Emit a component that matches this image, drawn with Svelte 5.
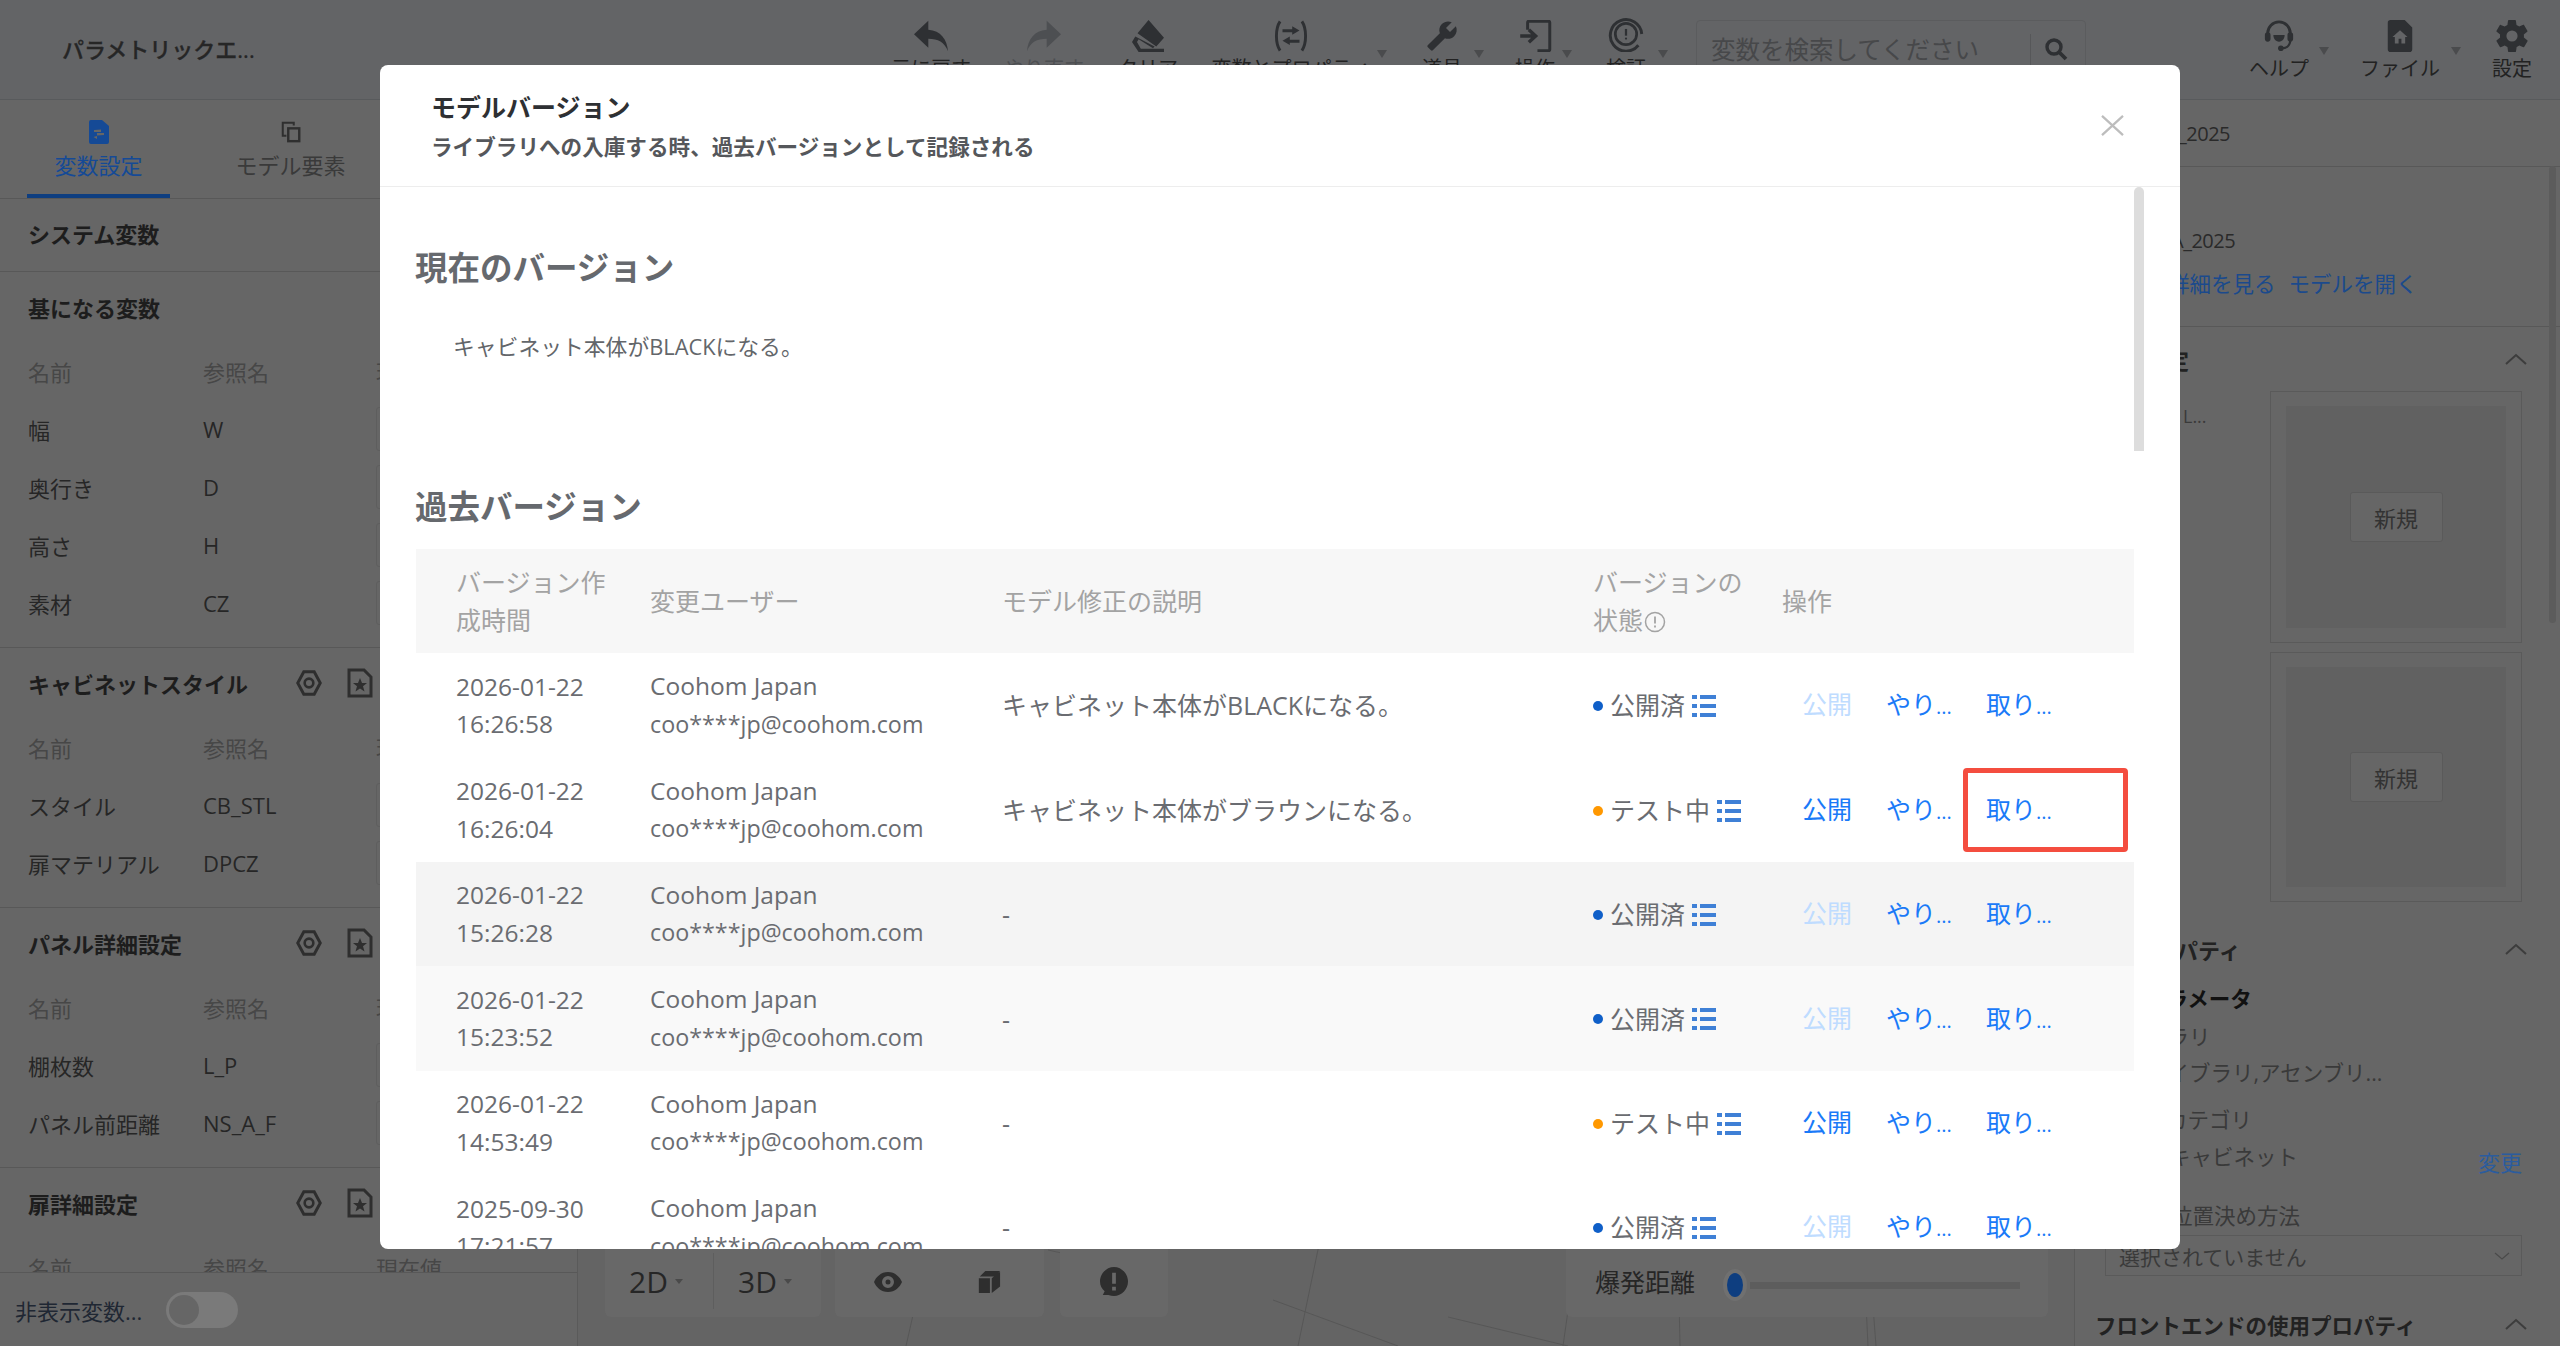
<script>
  const rows = [
    { d: '2026-01-22', t: '16:26:58', desc: 'キャビネット本体がBLACKになる。', s: 'pub' },
    { d: '2026-01-22', t: '16:26:04', desc: 'キャビネット本体がブラウンになる。', s: 'test', mark: true },
    { d: '2026-01-22', t: '15:26:28', desc: '-', s: 'pub', bg: 'hover' },
    { d: '2026-01-22', t: '15:23:52', desc: '-', s: 'pub', bg: 'soft' },
    { d: '2026-01-22', t: '14:53:49', desc: '-', s: 'test' },
    { d: '2025-09-30', t: '17:21:57', desc: '-', s: 'pub' }
  ];
  const sections = [
    { title: '基になる変数', items: [['幅', 'W'], ['奥行き', 'D'], ['高さ', 'H'], ['素材', 'CZ']] },
    { title: 'キャビネットスタイル', icons: true, items: [['スタイル', 'CB_STL'], ['扉マテリアル', 'DPCZ']] },
    { title: 'パネル詳細設定', icons: true, items: [['棚枚数', 'L_P'], ['パネル前距離', 'NS_A_F']] },
    { title: '扉詳細設定', icons: true, items: [] }
  ];
</script>

{#snippet chevUp()}
  <svg class="chev" viewBox="0 0 22 12"><path d="M1 11 11 2l10 9" fill="none" stroke="#3d3d3d" stroke-width="2"/></svg>
{/snippet}

<div class="page">
  <header class="top">
    <div class="brand">パラメトリックエ...</div>
    <div class="tool w112">
      <svg viewBox="2 4 19 17" class="ic"><path d="M10 9V4L2 11.500 10 19v-5c5.500 0 9 1.800 11 7-.5-6.500-4-11.500-11-12z"/></svg>
      <span>元に戻す</span>
    </div>
    <div class="tool w114 off">
      <svg viewBox="3 4 19 17" class="ic"><path d="M14 9V4l8 7.500-8 7.500v-5c-5.500 0-9 1.800-11 7 .5-6.500 4-11.500 11-12z"/></svg>
      <span>やり直す</span>
    </div>
    <div class="tool w94">
      <svg viewBox="0 0 29 29" class="ic"><path d="M15 0 29 16 22 24 5 12zM3 15 0 20l6 9h23v-3H8l-3.500-6 1.500-2.500 13 8 1.500-1.500z"/></svg>
      <span>クリア</span>
    </div>
    <div class="tool w192">
      <svg viewBox="2 1 28 26" class="ic"><path d="M7 2C3 8 3 20 7 26M25 2c4 6 4 18 0 24" fill="none" stroke="#2e3033" stroke-width="2.400"/><path d="M9 8.500h8V6l6 3.500-6 3.500v-2H9zM23 17h-8v-2.500L9 18l6 3.500v-2h8z"/></svg>
      <span>変数とプロパティ</span><i class="caret"></i>
    </div>
    <div class="tool w110">
      <svg viewBox="0 0 24 24" class="ic"><path d="M1.300 19 10.400 9.900c-.9-2.300-.4-5 1.500-6.900 2-2 5-2.400 7.400-1.300L15 6l3 3 4.400-4.300c1.200 2.400.7 5.400-1.300 7.400-1.900 1.900-4.600 2.400-6.900 1.500l-9.100 9.100c-.4.4-1 .4-1.400 0l-2.300-2.300c-.5-.4-.5-1.100-.1-1.400z"/></svg>
      <span>道具</span><i class="caret"></i>
    </div>
    <div class="tool w76">
      <svg viewBox="1 1 26 26" class="ic"><path d="M8 9V3a1 1 0 0 1 1-1h16a1 1 0 0 1 1 1v22a1 1 0 0 1-1 1h-9" fill="none" stroke="#2e3033" stroke-width="2.400"/><path d="M2 14h11M9 9l5.500 5L9 19" fill="none" stroke="#2e3033" stroke-width="2.800"/></svg>
      <span>操作</span><i class="caret"></i>
    </div>
    <div class="tool w106">
      <svg viewBox="0 0 32 32" class="ic big"><path d="M27 26A14 14 0 1 1 30 16" fill="none" stroke="#2e3033" stroke-width="2.600"/><circle cx="16" cy="16" r="9.500" fill="none" stroke="#2e3033" stroke-width="2.400"/><path d="M16 11.500v6" stroke="#2e3033" stroke-width="2"/><circle cx="16" cy="20" r="1" /></svg>
      <span>検証</span><i class="caret"></i>
    </div>
    <div class="search">
      <span class="ph">変数を検索してください</span>
      <span class="sbtn">
        <svg viewBox="0 0 24 24" class="sic"><circle cx="10" cy="10" r="7" fill="none" stroke="#2e3033" stroke-width="3.400"/><path d="m15 15 7 7" stroke="#2e3033" stroke-width="3.800"/></svg>
      </span>
    </div>
    <div class="tool w100 help">
      <svg viewBox="0 0 34 34" class="ic"><path d="M5 18v-4a12 12 0 0 1 24 0v4" fill="none" stroke="#2e3033" stroke-width="3"/><rect x="2" y="13" width="6" height="10" rx="3"/><rect x="26" y="13" width="6" height="10" rx="3"/><path d="M11 16h12c0 4-2.500 7-6 7s-6-3-6-7z"/><path d="M29 21c0 6-4 9-9 9" fill="none" stroke="#2e3033" stroke-width="2.400"/><circle cx="19" cy="30" r="3"/></svg>
      <span>ヘルプ</span><i class="caret"></i>
    </div>
    <div class="tool w142">
      <svg viewBox="0 0 26 34" class="ic"><path fill-rule="evenodd" d="M3 0h15l8 8v23a3 3 0 0 1-3 3H3a3 3 0 0 1-3-3V3a3 3 0 0 1 3-3zM13 11 5 18h2.500v7h4v-5h3v5h4v-7H21z"/></svg>
      <span>ファイル</span><i class="caret"></i>
    </div>
    <div class="tool w82">
      <svg viewBox="2 2 20 20" class="ic"><path d="M19.400 13c.04-.3.06-.65.06-1s-.02-.7-.07-1l2.100-1.650c.2-.15.25-.42.12-.64l-2-3.460c-.12-.22-.38-.3-.6-.22l-2.500 1c-.52-.4-1.070-.73-1.700-.98l-.37-2.650A.5.500 0 0 0 14 2h-4a.5.500 0 0 0-.5.420l-.37 2.650c-.6.250-1.180.590-1.700.980l-2.500-1c-.22-.08-.48 0-.6.220l-2 3.460c-.13.220-.07.490.12.640L4.570 11c-.05.3-.07.670-.07 1s.02.7.07 1l-2.100 1.650c-.2.150-.25.420-.12.640l2 3.460c.12.220.38.300.6.220l2.500-1c.52.400 1.070.730 1.700.980l.37 2.650c.05.240.25.420.5.420h4c.25 0 .46-.18.5-.42l.37-2.650c.6-.25 1.180-.58 1.700-.98l2.500 1c.22.080.48 0 .6-.22l2-3.460c.12-.22.07-.49-.12-.64zM12 15.500a3.500 3.500 0 1 1 0-7 3.500 3.500 0 0 1 0 7z"/></svg>
      <span>設定</span>
    </div>
  </header>

  <div class="main">
    <aside class="left">
      <div class="tabs">
        <div class="tab active">
          <svg viewBox="0 0 20 24" class="tabic"><path fill="#154a96" fill-rule="evenodd" d="M2 0h11l7 6v16a2 2 0 0 1-2 2H2a2 2 0 0 1-2-2V2a2 2 0 0 1 2-2zM5 10v2h7V9.500zM15 15v-2H8v2.500zM8 16v3l-3.500-2z"/></svg>
          <span>変数設定</span>
        </div>
        <div class="tab">
          <svg viewBox="0 0 24 24" class="tabic"><path d="M15 5V2H3v14h4" fill="none" stroke="#2f2f2f" stroke-width="2.200"/><rect x="9" y="8" width="12" height="14" fill="none" stroke="#2f2f2f" stroke-width="2.600"/></svg>
          <span>モデル要素</span>
        </div>
      </div>
      <div class="vars">
        <div class="sys">システム変数</div>
        {#each sections as sec}
          <section class="sec">
            <div class="sechead">
              <span>{sec.title}</span>
              {#if sec.icons}
                <svg viewBox="0 0 28 30" class="hex"><path d="M8 2h12l7 13-7 13H8L1 15z" fill="none" stroke="#2e2e2e" stroke-width="3.400"/><circle cx="14" cy="15" r="5" fill="none" stroke="#2e2e2e" stroke-width="3"/></svg>
                <svg viewBox="0 0 26 30" class="star"><path d="M2 9V2h15l7 7v19H2v-5" fill="none" stroke="#2e2e2e" stroke-width="3"/><path d="M2 9v14" stroke="#2e2e2e" stroke-width="3"/><path d="m13 10 2 5h5l-4 3.200 1.500 5.300-4.500-3-4.500 3L10 18.200 6 15h5z" fill="#2e2e2e"/></svg>
              {/if}
            </div>
            <div class="vrow headrow"><span class="c1">名前</span><span class="c2">参照名</span><span>現在値</span></div>
            {#each sec.items as it}
              <div class="vrow"><span class="c1">{it[0]}</span><span class="c2">{it[1]}</span><span class="inp"></span></div>
            {/each}
          </section>
        {/each}
      </div>
      <div class="foot">
        <span>非表示変数...</span>
        <span class="toggle"><i></i></span>
      </div>
    </aside>

    <div class="canvas">
      <svg class="lines" viewBox="0 0 1496 1246">
        <path d="M352 1140 328 1246M742 1140 720 1246M1000 1140 985 1246M1285 1140 1290 1246M1530 1140 1540 1246M695 1200 820 1246M470 1150 560 1170M870 1217 990 1246M1100 1149 1102 1246M1290 1140 1298 1246" fill="none" stroke="#575757" stroke-width="1"/>
      </svg>
      <div class="bars">
        <div class="bar dim">
          <span class="dimcell">2D<i></i></span>
          <span class="dimcell sep">3D<i></i></span>
        </div>
        <div class="bar views">
          <svg viewBox="0 0 30 22" class="eye"><path fill-rule="evenodd" d="M15 1c7 0 12 5 14 10-2 5-7 10-14 10S3 16 1 11C3 6 8 1 15 1zm0 4a6 6 0 1 0 0 12 6 6 0 0 0 0-12zm0 3.500a2.500 2.500 0 1 1 0 5 2.500 2.500 0 0 1 0-5z" fill="#2e2e2e"/></svg>
          <svg viewBox="0 0 26 26" class="cube"><path d="M9 1h16l-5 6H3zM2 9h12v16H2zM16 9l9-7v16l-9 7z" fill="#2e2e2e"/></svg>
        </div>
        <div class="bar warn">
          <svg viewBox="0 0 30 32" class="warnic"><path fill-rule="evenodd" d="M15 0c8 0 15 7 15 15.500S23 31 15 31c-2 0-4-.3-6-1H3l2-4C2 23 0 20 0 15.500 0 7 7 0 15 0zm-2 6v12h4V6zm0 15v4h4v-4z" fill="#2e2e2e"/></svg>
        </div>
        <div class="bar explode">
          <span>爆発距離</span>
          <span class="slider"><i></i></span>
        </div>
      </div>
    </div>

    <aside class="right">
      <div class="rhead"><span>_2025</span></div>
      <div class="rinfo">
        <div class="rname">A_2025</div>
        <div class="rlinks"><span>詳細を見る</span><span>モデルを開く</span></div>
      </div>
      <div class="rsec">定{@render chevUp()}</div>
      <div class="thumbs">
        <span class="tl">L...</span>
        <div class="tcol">
          <div class="tbox first"><div class="tin"><span class="new">新規</span></div></div>
          <div class="tbox"><div class="tin"><span class="new">新規</span></div></div>
        </div>
      </div>
      <div class="rsec s2"><span class="l">プロパティ</span>{@render chevUp()}</div>
      <div class="rl bold a1">パラメータ</div>
      <div class="rl a2">ライブラリ</div>
      <div class="rl a3">ライブラリ,アセンブリ...</div>
      <div class="rl a4">カテゴリ</div>
      <div class="rl a5"><span>キャビネット</span><b>変更</b></div>
      <div class="rl a6">位置決め方法</div>
      <div class="sel"><span>選択されていません</span>
        <svg viewBox="0 0 16 8" class="selc"><path d="m1 1 7 6 7-6" fill="none" stroke="#4a4a4a" stroke-width="1.200"/></svg>
      </div>
      <div class="rsec s3"><span class="l">フロントエンドの使用プロパティ</span>{@render chevUp()}</div>
    </aside>
  </div>

  <div class="modal">
    <div class="mhead">
      <div class="mtitle">モデルバージョン</div>
      <div class="msub">ライブラリへの入庫する時、過去バージョンとして記録される</div>
      <svg viewBox="0 0 24 22" class="close"><path d="m1 1 22 20M23 1 1 21" fill="none" stroke="#bdbdbd" stroke-width="2.400"/></svg>
    </div>
    <div class="mbody">
      <div class="thumbar"></div>
      <h2 class="h1st">現在のバージョン</h2>
      <p class="cur">キャビネット本体がBLACKになる。</p>
      <h2 class="h2nd">過去バージョン</h2>
      <div class="table">
        <div class="tr th">
          <div class="col1">バージョン作成時間</div>
          <div>変更ユーザー</div>
          <div>モデル修正の説明</div>
          <div class="st">バージョンの<br/>状態<svg viewBox="0 0 22 22" class="info"><circle cx="11" cy="11" r="9.500" fill="none" stroke="#a3a3a3" stroke-width="1.500"/><path d="M11 5.500v7M11 14.500v2" stroke="#a3a3a3" stroke-width="1.800"/></svg></div>
          <div>操作</div>
        </div>
        {#each rows as r}
          <div class="tr {r.bg || ''}">
            <div class="col1 lat">{r.d}<br/>{r.t}</div>
            <div><span class="lat">Coohom Japan</span><br/><span class="mail">coo****jp@coohom.com</span></div>
            <div class="low">{r.desc}</div>
            <div class="status low">
              <i class="dot {r.s}"></i>
              <span>{r.s === 'pub' ? '公開済' : 'テスト中'}</span>
              <svg viewBox="0 0 24 22" class="list"><path d="M0 0h5v4H0zM8 0h16v4H8zM0 9h5v4H0zM8 9h16v4H8zM0 18h5v4H0zM8 18h16v4H8z" fill="#3f80d6"/></svg>
            </div>
            <div class="ops low">
              <span class="a pubbtn" class:dis={r.s === 'pub'}>公開</span>
              <span class="a redo">やり<small>...</small></span>
              <span class="a">取り<small>...</small></span>
            </div>
            {#if r.mark}<div class="mark"></div>{/if}
          </div>
        {/each}
      </div>
    </div>
  </div>
</div>

<style>
  :global(body) { margin: 0; background: #666; }
  .page {
    position: relative;
    width: 2560px;
    height: 1346px;
    overflow: hidden;
    display: flex;
    flex-direction: column;
    font-family: "Open Sans", "Noto Sans CJK JP", sans-serif;
    font-size: 22px;
    color: #222;
    background: #666;
  }
  .top {
    height: 100px;
    box-sizing: border-box;
    border-bottom: 1px solid #585a5c;
    background: #636466;
    display: flex;
    flex: none;
    position: relative;
  }
  .brand {
    width: 875px;
    box-sizing: border-box;
    padding: 32px 0 0 62px;
    font-size: 22px;
    line-height: 34px;
    font-weight: 500;
    color: #262626;
    -webkit-text-stroke: 0.3px #262626;
  }
  .tool {
    position: relative;
    display: flex;
    flex-direction: column;
    align-items: center;
    font-size: 20px;
    color: #222;
    padding-top: 20px;
    box-sizing: border-box;
  }
  .tool span { line-height: 28px; margin-top: 3px; white-space: nowrap; }
  .ic { width: 34px; height: 32px; fill: #2e3033; display: block; }
  .big { height: 36px; width: 36px; margin-top: -4px; }
  .off { color: #4d4f52; }
  .off .ic { fill: #4d4f52; }
  .w112 { width: 112px; }
  .w114 { width: 114px; }
  .w94 { width: 94px; }
  .w192 { width: 192px; }
  .w110 { width: 110px; }
  .w76 { width: 76px; }
  .w106 { width: 106px; }
  .w100 { width: 100px; }
  .w142 { width: 142px; }
  .w82 { width: 82px; }
  .help { margin-left: 143px; }
  .caret {
    position: absolute;
    right: 7px;
    top: 47px;
    width: 0;
    height: 0;
    border: 5.500px solid transparent;
    border-top: 8px solid #4a4b4d;
    border-bottom: 0;
  }
  .w192 .caret { right: 0; top: 50px; }
  .w110 .caret { right: 13px; top: 50px; }
  .w76 .caret { right: 1px; top: 50px; }
  .w106 .caret { right: 11px; top: 50px; }
  .w100 .caret { right: 0; }
  .w142 .caret { right: 10px; }
  .search {
    margin: 20px 0 0 17px;
    width: 390px;
    height: 66px;
    box-sizing: border-box;
    border: 1px solid #5b5c5e;
    border-radius: 4px;
    display: flex;
    padding: 13px 0 0 14px;
    font-size: 24.500px;
    color: #47484a;
  }
  .ph { width: 319px; line-height: 32px; flex: none; white-space: nowrap; }
  .sbtn { border-left: 1px solid #565759; height: 32px; flex: 1; padding-left: 13px; }
  .sic { width: 24px; height: 30px; display: block; }

  .main { flex: 1; display: flex; min-height: 0; }
  .left {
    width: 578px;
    flex: none;
    box-sizing: border-box;
    border-right: 1px solid #5a5a5a;
    display: flex;
    flex-direction: column;
  }
  .tabs { height: 98px; flex: none; display: flex; border-bottom: 1px solid #585858; box-sizing: content-box; }
  .tab {
    width: 143px;
    margin-left: 27px;
    height: 98px;
    box-sizing: border-box;
    display: flex;
    flex-direction: column;
    align-items: center;
    padding-top: 20px;
    color: #3a3a3a;
  }
  .tab + .tab { margin-left: 49px; }
  .tab span { line-height: 30px; margin-top: 6px; white-space: nowrap; }
  .tab.active { color: #154a96; border-bottom: 4px solid #0e3e80; }
  .tabic { width: 22px; height: 24px; display: block; }
  .vars { flex: 1; min-height: 0; overflow: hidden; }
  .sys {
    height: 72px;
    line-height: 71px;
    padding-left: 28px;
    font-weight: 700;
    color: #1d1d1d;
    border-bottom: 1px solid #585858;
  }
  .sec { border-bottom: 1px solid #585858; padding-bottom: 13px; }
  .sechead {
    height: 72px;
    box-sizing: border-box;
    padding: 0 0 2px 28px;
    display: flex;
    align-items: center;
    font-weight: 700;
    color: #1d1d1d;
  }
  .sechead span { width: 267px; white-space: nowrap; }
  .hex { width: 28px; height: 26px; }
  .star { width: 26px; height: 30px; margin-left: 24px; }
  .vrow { height: 58px; box-sizing: border-box; display: flex; align-items: center; padding: 0 0 4px 28px; color: #262626; }
  .headrow { color: #474747; }
  .c1 { width: 175px; }
  .c2 { width: 173px; }
  .inp { width: 180px; height: 42px; border: 1px solid #5e5e5e; border-radius: 3px; }
  .foot {
    height: 74px;
    flex: none;
    box-sizing: border-box;
    border-top: 1px solid #585858;
    background: #666;
    display: flex;
    align-items: center;
    padding-left: 15px;
    color: #1f2733;
  }
  .foot span:first-child { width: 151px; white-space: nowrap; }
  .toggle { width: 72px; height: 36px; border-radius: 18px; background: #7a7a7a; padding: 3px; box-sizing: border-box; }
  .toggle i { display: block; width: 30px; height: 30px; border-radius: 50%; background: #666; }

  .canvas { flex: 1; position: relative; background: #646464; min-width: 0; }
  .lines { position: absolute; inset: 0; width: 100%; height: 100%; }
  .bars {
    position: absolute;
    left: 27px;
    right: 26px;
    bottom: 29px;
    height: 90px;
    display: flex;
  }
  .bar { background: #686868; border-radius: 6px; height: 100%; box-sizing: border-box; display: flex; align-items: center; }
  .dim { width: 216px; }
  .dimcell { width: 108px; height: 56px; box-sizing: border-box; display: flex; align-items: center; padding-left: 24px; font-size: 30px; color: #262626; margin-top: 18px; }
  .dimcell.sep { border-left: 1px solid #5e5e5e; padding-left: 24px; }
  .dimcell i { width: 0; height: 0; border: 4px solid transparent; border-top: 5px solid #4a4a4a; border-bottom: 0; margin-left: 7px; }
  .views { width: 209px; margin-left: 14px; padding: 20px 0 0 38px; }
  .eye { width: 30px; height: 22px; }
  .cube { width: 24px; height: 24px; margin-left: 74px; }
  .warn { width: 108px; margin-left: 16px; justify-content: center; padding-top: 20px; }
  .warnic { width: 28px; height: 32px; }
  .explode { width: 482px; margin-left: auto; padding: 18px 0 0 29px; font-size: 25px; color: #262626; }
  .explode span:first-child { width: 106px; flex: none; white-space: nowrap; }
  .slider { position: relative; display: block; width: 270px; height: 7px; margin: 8px 0 0 49px; background: #5d5d5d; }
  .slider i { position: absolute; left: -23px; top: -9px; width: 16px; height: 24px; border-radius: 50%; background: #0e3e80; box-shadow: 0 0 0 4px #707070; }

  .right { width: 486px; flex: none; box-sizing: border-box; border-left: 1px solid #5a5a5a; position: relative; color: #3a3a3a; }
  .right::after { content: ''; position: absolute; top: 66px; right: 4px; width: 7px; height: 457px; background: #5c5c5c; border-radius: 4px; }
  .rhead { height: 66px; box-sizing: content-box; border-bottom: 1px solid #585858; padding-left: 103px; line-height: 68px; color: #2a2a2a; font-size: 20px; letter-spacing: -0.5px; }
  .rinfo { box-sizing: content-box; height: 159px; border-bottom: 1px solid #585858; }
  .rname { padding: 56px 0 0 96px; line-height: 36px; color: #2a2a2a; font-size: 20px; letter-spacing: -0.5px; }
  .rlinks { display: flex; gap: 13px; padding: 7px 0 0 93px; line-height: 36px; color: #1b4a8c; font-size: 21.500px; white-space: nowrap; }
  .rsec { height: 50px; margin-top: 7px; display: flex; align-items: center; justify-content: space-between; font-weight: 700; color: #222; padding-left: 92px; padding-right: 33px; font-size: 22px; }
  .chev { width: 22px; height: 12px; }
  .thumbs { display: flex; margin-top: 7px; position: relative; }
  .tl { width: 194px; padding-left: 108px; box-sizing: border-box; margin-top: 7px; line-height: 36px; flex: none; font-size: 18px; }
  .tcol { width: 252px; margin-left: 1px; }
  .tbox { height: 250px; box-sizing: border-box; border: 1px solid #5a5a5a; padding: 14px 15px; margin-top: 9px; }
  .tbox.first { margin-top: 0; height: 252px; }
  .tin { height: 100%; background: #616161; display: flex; align-items: center; justify-content: center; }
  .new { width: 93px; height: 50px; box-sizing: border-box; border: 1px solid #5a5a5a; background: #666; border-radius: 3px; display: flex; align-items: center; justify-content: center; color: #333; font-size: 22px; }
  .rsec.s2 { height: 40px; margin-top: 27px; padding-left: 57px; }
  .rsec.s3 { height: 38px; margin-top: 29px; padding-left: 20px; font-size: 21.500px; }
  .rl { height: 36px; line-height: 36px; font-size: 21.500px; white-space: nowrap; display: flex; }
  .bold { font-weight: 700; color: #111; }
  .a1 { padding-left: 70px; margin-top: 12px; }
  .a2 { padding-left: 28px; margin-top: 2px; }
  .a3 { padding-left: 71px; }
  .a4 { padding-left: 91px; margin-top: 11px; }
  .a5 { padding-left: 94px; margin-top: 1px; padding-right: 38px; justify-content: space-between; }
  .a5 b { font-weight: 400; color: #2b5c9e; font-size: 22px; margin-top: 5px; }
  .a6 { padding-left: 96px; margin-top: 23px; }
  .sel { margin: 1px 38px 0 30px; height: 41px; box-sizing: border-box; border: 1px solid #5a5a5a; display: flex; align-items: center; justify-content: space-between; padding: 0 11px 0 13px; font-size: 21px; color: #3a3a3a; }
  .selc { width: 16px; height: 8px; }

  .modal {
    position: absolute;
    left: 380px;
    top: 65px;
    width: 1800px;
    height: 1184px;
    background: #fff;
    border-radius: 8px;
    overflow: hidden;
    display: flex;
    flex-direction: column;
  }
  .mhead {
    position: relative;
    height: 121px;
    flex: none;
    box-sizing: content-box;
    border-bottom: 1px solid #ededed;
    padding-left: 51px;
  }
  .mtitle { font-size: 25px; line-height: 36px; font-weight: 700; color: #2e3033; padding-top: 24px; }
  .msub { font-size: 21.600px; line-height: 32px; font-weight: 700; color: #55575b; margin-top: 6px; }
  .close { position: absolute; right: 56px; top: 50px; width: 23px; height: 21px; }
  .mbody { position: relative; flex: 1; min-height: 0; overflow: hidden; padding-left: 36px; }
  .thumbar { position: absolute; left: 1754px; top: 0; width: 10px; height: 264px; background: #ddd; border-radius: 5px 5px 0 0; }
  h2 { margin: 0 0 0 -1px; font-size: 32.500px; line-height: 46px; font-weight: 700; color: #66696e; }
  .h1st { margin-top: 58px; }
  .cur { margin: 41px 0 0 37px; font-size: 21.800px; line-height: 30px; color: #63666a; }
  .h2nd { margin-top: 122px; }
  .table { margin-top: 19px; width: 1718px; font-size: 25px; line-height: 37.500px; color: #6a6c71; }
  .tr {
    position: relative;
    display: grid;
    grid-template-columns: 194px 352px 591px 189px 392px;
    height: 104.400px;
    align-items: center;
  }
  .tr > div { padding-left: 40px; box-sizing: border-box; min-width: 0; }
  .tr > .low { padding-top: 2px; }
  .th { background: #f7f7f7; color: #a3a3a3; height: 104px; line-height: 38px; box-sizing: border-box; }
  .th .col1 { word-break: break-all; }
  .st { white-space: nowrap; }
  .lat { font-size: 24.500px; }
  .mail { font-size: 23.300px; }
  .hover { background: #f4f4f4; }
  .soft { background: #f9f9f9; }
  .info { width: 22px; height: 22px; vertical-align: -3px; margin-left: 1px; }
  .status { display: flex; align-items: center; white-space: nowrap; }
  .dot { width: 10px; height: 10px; border-radius: 50%; margin-right: 7px; flex: none; }
  .dot.pub { background: #0f5fc8; }
  .dot.test { background: #ff9800; }
  .list { width: 24px; height: 22px; margin-left: 7px; flex: none; }
  .tr > .ops { padding-left: 60px; display: flex; color: #1a7af8; white-space: nowrap; }
  .a { display: block; }
  .a small { font-size: 20px; }
  .pubbtn { width: 84px; }
  .redo { width: 100px; }
  .dis { color: #bfdcff; }
  .tr > .mark {
    position: absolute;
    left: 1547px;
    top: 11px;
    width: 165px;
    height: 84px;
    padding: 0;
    box-sizing: border-box;
    border: 5px solid #f44d3f;
    border-radius: 4px;
  }
</style>
